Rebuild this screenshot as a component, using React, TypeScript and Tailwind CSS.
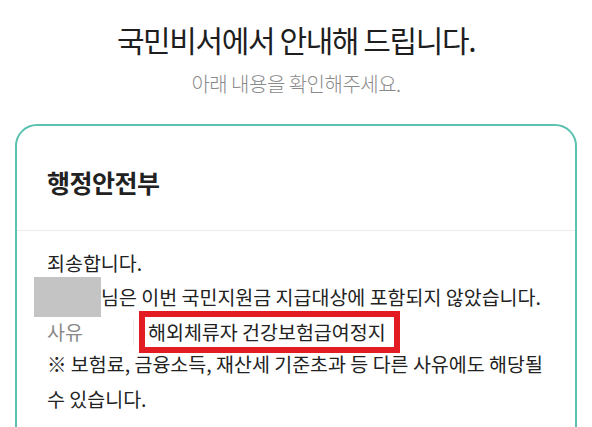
export default function App() {
  return (
    <div
      className="min-h-screen bg-white text-[#222]"
      style={{ fontFamily: '"Noto Sans CJK KR", "Noto Sans", sans-serif' }}
    >
      {/* Heading */}
      <div className="pt-[19px] text-center">
        <h1 className="text-[30px] leading-[40px] tracking-[-1.4px] font-normal text-[#1e1e1e]">
          국민비서에서 안내해 드립니다.
        </h1>
        <p className="mt-[12px] text-[20px] leading-[26px] tracking-[-0.5px] font-light text-[#8a8a8a]">
          아래 내용을 확인해주세요.
        </p>
      </div>

      {/* Card */}
      <div className="mt-[27px] mx-[15px] rounded-[22px] border-2 border-[#5cc1b0] pb-[40px]">
        <div className="h-[105px] pl-[30px] pt-[40px] border-b border-[#ececec]">
          <h2 className="text-[25px] leading-[32px] tracking-[-0.5px] font-bold text-[#222]">
            행정안전부
          </h2>
        </div>

        <div className="pl-[30px] pr-[10px] pt-[18px] text-[19.5px] text-[#222]">
          <p className="leading-[28px]">죄송합니다.</p>

          <div className="flex items-center h-[40px]">
            <div className="ml-[-13px] w-[67px] h-[40px] shrink-0 bg-[#c4c4c4]" />
            <span className="leading-[28px] whitespace-nowrap">님은 이번 국민지원금 지급대상에 포함되지 않았습니다.</span>
          </div>

          <div className="mt-[-6px] flex items-center h-[42px]">
            <span className="w-[86px] text-[#8a8a8a] leading-[28px]">사유</span>
            <div className="w-px h-[26px] bg-[#ececec]" />
            <div className="ml-[5px] h-[42px] border-[6px] border-[#e31b23] pl-[3px] pr-[8px] flex items-center bg-white">
              <span className="leading-[28px] whitespace-nowrap">해외체류자 건강보험급여정지</span>
            </div>
          </div>

          <p className="mt-[-7px] leading-[35px]">
            ※ 보험료, 금융소득, 재산세 기준초과 등 다른 사유에도 해당될
            <br />
            수 있습니다.
          </p>
        </div>
      </div>
    </div>
  );
}
